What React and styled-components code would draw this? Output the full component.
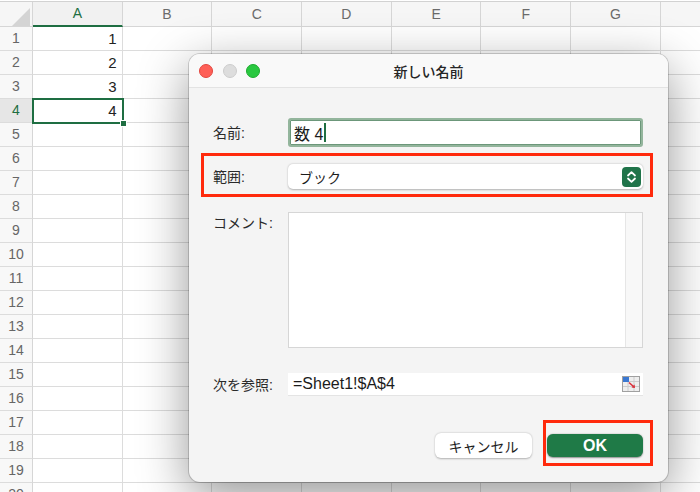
import React from 'react';
import styled, { createGlobalStyle, css } from 'styled-components';

const GlobalStyle = createGlobalStyle`
    html, body {
        margin: 0;
        padding: 0;
        background: #ffffff;
        overflow: hidden;
    }
    body {
        font-family: "Liberation Sans", "Noto Sans CJK JP", sans-serif;
    }
`

const EXCEL_GREEN = '#1e6e42';
const COLS = ['A', 'B', 'C', 'D', 'E', 'F', 'G', 'H'];
const ROWS = 20;
const VALUES = { 1: '1', 2: '2', 3: '3', 4: '4' };

const Page = styled.div`
    position: relative;
    width: 700px;
    height: 492px;
    overflow: hidden;
`

const Sheet = styled.div`
    display: grid;
    grid-template-columns: 33px repeat(8, 89.7px);
    grid-template-rows: 25px;
    grid-auto-rows: 24px;
    margin-top: 1px;
    border-top: 1px solid #d2d2d2;
`

const Corner = styled.div`
    position: relative;
    background: #f6f6f6;
    border-right: 1px solid #d6d6d6;
    border-bottom: 1px solid #d6d6d6;
    &::after {
        content: '';
        position: absolute;
        left: 12px;
        top: 6px;
        width: 18px;
        height: 18px;
        background: #d4d4d4;
        clip-path: polygon(100% 0, 100% 100%, 0 100%);
    }
`

const ColHead = styled.div`
    box-sizing: border-box;
    background: #f6f6f6;
    border-right: 1px solid #d6d6d6;
    border-bottom: 1px solid #d6d6d6;
    color: #6b6b6b;
    font-size: 14px;
    line-height: 24px;
    text-align: center;
    ${p => p.$active && css`
        color: ${EXCEL_GREEN};
        background: #f1f1f1;
        border-bottom: 2px solid ${EXCEL_GREEN};
        line-height: 23px;
    `}
`

const RowHead = styled.div`
    box-sizing: border-box;
    background: #f8f8f8;
    border-right: 1px solid #d6d6d6;
    border-bottom: 1px solid #dcdcdc;
    color: #666;
    font-size: 14px;
    line-height: 23px;
    text-align: center;
    ${p => p.$active && css`
        color: ${EXCEL_GREEN};
        background: #e6e6e6;
    `}
`

const Cell = styled.div`
    box-sizing: border-box;
    background: #ffffff;
    border-right: 1px solid #dcdcdc;
    border-bottom: 1px solid #dcdcdc;
    color: #222;
    font-size: 15px;
    line-height: 23px;
    text-align: right;
    padding-right: 5px;
    ${p => p.$selected && css`
        position: relative;
        &::after {
            content: '';
            position: absolute;
            top: -1px;
            left: -1px;
            right: -2px;
            bottom: -2px;
            border: 2px solid ${EXCEL_GREEN};
            z-index: 1;
        }
        &::before {
            content: '';
            position: absolute;
            right: -5px;
            bottom: -5px;
            width: 5px;
            height: 5px;
            background: ${EXCEL_GREEN};
            border: 1px solid #fff;
            z-index: 2;
        }
    `}
`

const Dialog = styled.div`
    position: absolute;
    left: 189px;
    top: 54px;
    width: 479px;
    height: 428px;
    box-sizing: border-box;
    background: #f4f4f4;
    border-radius: 11px;
    box-shadow: 0 14px 50px rgba(0, 0, 0, 0.42), 0 0 0 1px rgba(0, 0, 0, 0.16);
    overflow: hidden;
    display: flex;
    flex-direction: column;
`

const TitleBar = styled.div`
    position: relative;
    height: 34px;
    flex: none;
    box-sizing: border-box;
    background: #f9f9f9;
    border-bottom: 1px solid #e3e3e3;
    display: flex;
    align-items: center;
    justify-content: center;
`

const Lights = styled.div`
    position: absolute;
    left: 10px;
    top: 10px;
    display: flex;
    gap: 9.5px;
`

const Light = styled.span`
    width: 14px;
    height: 14px;
    box-sizing: border-box;
    border-radius: 50%;
    background: ${p => p.$color};
    border: 0.5px solid ${p => p.$edge};
`

const Title = styled.div`
    font-family: "Noto Sans CJK JP", sans-serif;
    font-size: 14px;
    font-weight: 500;
    color: #262626;
`

const Body = styled.div`
    padding: 30px 25px 0 24px;
    display: flex;
    flex-direction: column;
`

const Row = styled.div`
    display: grid;
    grid-template-columns: 75px 355px;
    align-items: ${p => (p.$top ? 'start' : 'center')};
    margin-top: ${p => p.$mt || 0}px;
`

const Label = styled.div`
    font-size: 14px;
    color: #2a2a2a;
    line-height: 20px;
    padding-top: ${p => p.$pt || 0}px;
`

const Highlight = styled.div`
    border: 3px solid #ff2a0c;
    margin: ${p => p.$margin};
    padding: ${p => p.$padding};
`

const NameInput = styled.div`
    box-sizing: border-box;
    height: 29px;
    background: #fff;
    border: 2px solid #93b59c;
    box-shadow: inset 0 0 0 1px #6c977a;
    border-radius: 3px;
    padding-left: 4px;
    display: flex;
    align-items: center;
    font-size: 16px;
    color: #1c1c1c;
`

const Caret = styled.span`
    display: inline-block;
    width: 2px;
    height: 19px;
    margin-left: 1px;
    background: ${EXCEL_GREEN};
`

const Select = styled.div`
    box-sizing: border-box;
    height: 25px;
    background: #fff;
    border-radius: 5px;
    box-shadow: 0 0.5px 2px rgba(0, 0, 0, 0.28);
    padding: 0 2px 0 11px;
    display: flex;
    align-items: center;
    justify-content: space-between;
    font-size: 14px;
    color: #1c1c1c;
`

const TextArea = styled.div`
    box-sizing: border-box;
    height: 136px;
    background: #fff;
    border: 1px solid #d6d6d6;
    display: flex;
    justify-content: flex-end;
`

const ScrollTrack = styled.div`
    width: 16px;
    background: #f8f8f8;
    border-left: 1px solid #e6e6e6;
`

const RefInput = styled.div`
    box-sizing: border-box;
    height: 23px;
    background: #fff;
    border-bottom: 1px solid #e4e4e4;
    padding: 0 3px 0 5px;
    display: flex;
    align-items: center;
    justify-content: space-between;
    font-size: 16px;
    color: #1c1c1c;
`

const Buttons = styled.div`
    display: flex;
    justify-content: flex-end;
    align-items: center;
    gap: 15px;
    margin-top: 37px;
`

const Button = styled.button`
    box-sizing: border-box;
    width: ${p => p.$w}px;
    height: ${p => p.$h}px;
    border: none;
    border-radius: 6px;
    font-family: "Liberation Sans", "Noto Sans CJK JP", sans-serif;
    font-size: 14px;
    padding: 0;
    color: #1c1c1c;
    background: #fff;
    box-shadow: 0 0.5px 2px rgba(0, 0, 0, 0.28);
    ${p => p.$primary && css`
        background: #1f7a47;
        color: #fff;
        font-weight: 700;
        font-size: 16px;
        box-shadow: 0 0.5px 1.5px rgba(0, 0, 0, 0.4);
    `}
`

function Stepper() {
    return (
        <svg width="19" height="20" viewBox="0 0 19 20">
            <rect x="0" y="0" width="19" height="20" rx="4" fill="#20744a" />
            <path d="M6 8.5 L9.5 5.2 L13 8.5" fill="none" stroke="#fff" strokeWidth="1.8" strokeLinecap="round" strokeLinejoin="round" />
            <path d="M6 11.5 L9.5 14.8 L13 11.5" fill="none" stroke="#fff" strokeWidth="1.8" strokeLinecap="round" strokeLinejoin="round" />
        </svg>
    );
}

function RefIcon() {
    return (
        <svg width="18" height="16" viewBox="0 0 18 16">
            <rect x="0.5" y="0.5" width="17" height="15" fill="#eeeeee" stroke="#a0a0a0" />
            <path d="M6 1V15 M12 1V15 M1 5.5H17 M1 10.5H17" stroke="#cccccc" strokeWidth="1" />
            <rect x="1" y="1" width="6" height="5" fill="#3a78d2" />
            <path d="M7 6.5 L12 11" stroke="#d8303a" strokeWidth="1.6" />
            <path d="M13 12 L9.5 11.6 L12.6 8.5 Z" fill="#d8303a" />
        </svg>
    );
}

function App() {
    return (
        <>
            <GlobalStyle />
            <Page>
                <Sheet>
                    <Corner />
                    {COLS.map(c => (
                        // H sits past the right edge of the window, so its letter is not shown
                        <ColHead key={c} $active={c === 'A'}>{c === 'H' ? '' : c}</ColHead>
                    ))}
                    {Array.from({ length: ROWS }, (_, i) => i + 1).map(r => (
                        <React.Fragment key={r}>
                            <RowHead $active={r === 4}>{r}</RowHead>
                            {COLS.map(c => (
                                <Cell key={c} $selected={c === 'A' && r === 4}>
                                    {c === 'A' ? VALUES[r] : ''}
                                </Cell>
                            ))}
                        </React.Fragment>
                    ))}
                </Sheet>

                <Dialog>
                    <TitleBar>
                        <Lights>
                            <Light $color="#fe5f57" $edge="#e2463f" />
                            <Light $color="#dddddd" $edge="#cccccc" />
                            <Light $color="#29c840" $edge="#1eab2f" />
                        </Lights>
                        <Title>新しい名前</Title>
                    </TitleBar>
                    <Body>
                        <Row>
                            <Label>名前:</Label>
                            <NameInput>数 4<Caret /></NameInput>
                        </Row>
                        <Highlight $margin="6px -10px -8px -12px" $padding="8px 7px 5px 9px">
                            <Row>
                                <Label>範囲:</Label>
                                <Select>
                                    ブック
                                    <Stepper />
                                </Select>
                            </Row>
                        </Highlight>
                        <Row $mt={23} $top>
                            <Label $pt={1}>コメント:</Label>
                            <TextArea>
                                <ScrollTrack />
                            </TextArea>
                        </Row>
                        <Row $mt={25}>
                            <Label>次を参照:</Label>
                            <RefInput>
                                =Sheet1!$A$4
                                <RefIcon />
                            </RefInput>
                        </Row>
                        <Buttons>
                            <Button $w={97} $h={25}>キャンセル</Button>
                            <Highlight $margin="-14px -10px -9px -4px" $padding="11px 7px 6px 1px">
                                <Button $primary $w={96} $h={23}>OK</Button>
                            </Highlight>
                        </Buttons>
                    </Body>
                </Dialog>
            </Page>
        </>
    );
}

export default App;
